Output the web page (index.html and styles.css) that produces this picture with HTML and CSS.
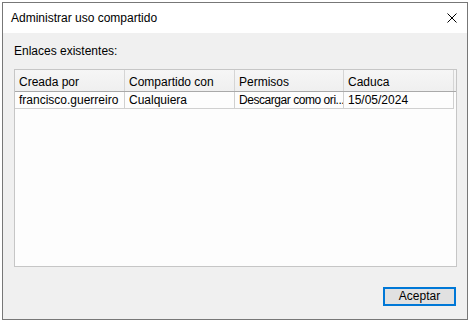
FILE: index.html
```html
<!DOCTYPE html>
<html lang="es">
<head>
<meta charset="utf-8">
<title>Administrar uso compartido</title>
<link rel="stylesheet" href="styles.css">
</head>
<body>
<div class="window">
  <div class="titlebar">
    <span class="title">Administrar uso compartido</span>
    <svg class="close" width="10" height="10" viewBox="0 0 10 10"><path d="M0.5 0.5 L9.5 9.5 M9.5 0.5 L0.5 9.5" stroke="#000" stroke-width="1" fill="none"/></svg>
  </div>
  <div class="content">
    <div class="label">Enlaces existentes:</div>
    <div class="list">
      <div class="row head">
        <div class="cell">Creada por</div>
        <div class="cell">Compartido con</div>
        <div class="cell">Permisos</div>
        <div class="cell">Caduca</div>
      </div>
      <div class="row data">
        <div class="cell">francisco.guerreiro</div>
        <div class="cell">Cualquiera</div>
        <div class="cell tight">Descargar como ori...</div>
        <div class="cell">15/05/2024</div>
      </div>
    </div>
    <div class="footer">
      <button class="btn">Aceptar</button>
    </div>
  </div>
</div>
</body>
</html>
```

FILE: styles.css
```css
* { box-sizing: border-box; }
html, body { margin: 0; padding: 0; background: #fff; }
body {
  font-family: "Liberation Sans", Arial, sans-serif;
  font-size: 12px;
  color: #000;
}
.window {
  margin: 2px 0 0 2px;
  width: 466px;
  height: 318px;
  border: 1px solid #777;
  display: flex;
  flex-direction: column;
  background: #f0f0f0;
}
.titlebar {
  height: 30px;
  background: #fff;
  display: flex;
  align-items: center;
  justify-content: space-between;
  padding: 0 10px 0 8px;
}
.title { font-size: 12px; line-height: 16px; }
.close { display: block; }
.content {
  flex: 1;
  display: flex;
  flex-direction: column;
  padding: 10px 10px 0 11px;
}
.label { line-height: 16px; height: 16px; }
.list {
  margin-top: 10px;
  height: 198px;
  border: 1px solid #c6c6c6;
  background: #fdfdfd;
}
.row {
  display: grid;
  grid-template-columns: 110px 110px 109px 110px;
}
.head {
  height: 22px;
  background: linear-gradient(#f6f6f6, #efefef);
  border-bottom: 1px solid #a9a9a9;
}
.head .cell {
  border-right: 1px solid #d5d5d5;
  line-height: 21px;
  padding-top: 2px;
}
.data {
  height: 17px;
  width: 439px;
  border-bottom: 1px solid #d0d0d0;
}
.data .cell {
  border-right: 1px solid #d0d0d0;
  line-height: 16px;
}
.cell {
  padding-left: 4px;
  white-space: nowrap;
  overflow: hidden;
}
.tight { letter-spacing: -0.45px; }
.footer {
  margin-top: 20px;
  display: flex;
  justify-content: flex-end;
  padding-right: 1px;
}
.btn {
  width: 73px;
  height: 19px;
  border: 2px solid #0078d7;
  background: #e1e1e1;
  font: inherit;
  font-size: 12px;
  line-height: 13px;
  padding: 0;
  color: #000;
}
```
